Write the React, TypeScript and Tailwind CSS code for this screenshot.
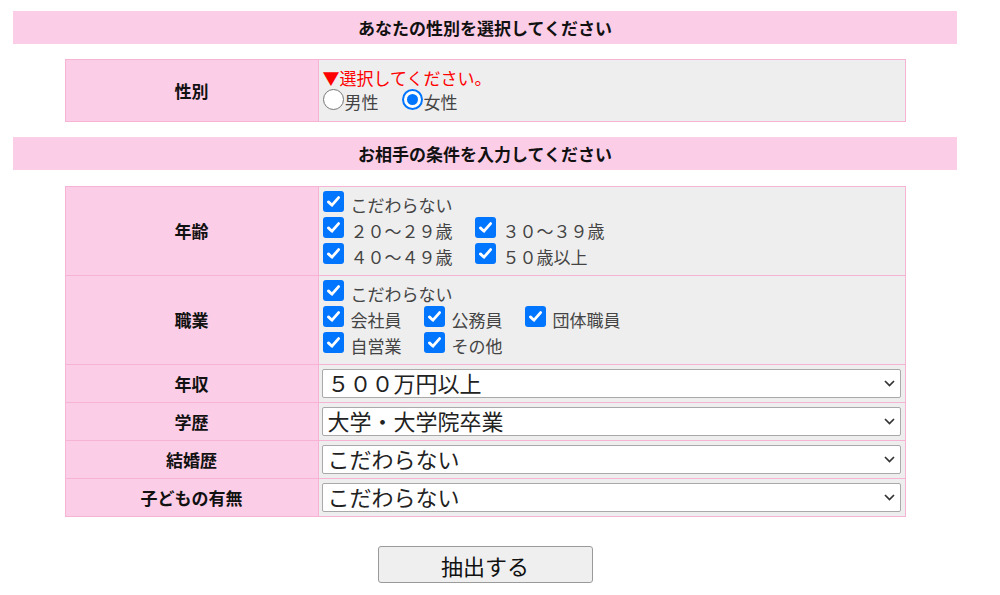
import React from "react";

const F = { fontFamily: '"Noto Sans CJK JP", "Noto Sans", sans-serif' };

function Box() {
  return (
    <span className="w-[21px] h-[21px] rounded-[3px] bg-[#0075ff] flex items-center justify-center shrink-0">
      <svg width="15" height="15" viewBox="0 0 15 15">
        <path d="M2.4 7.9 L6 11.2 L12.6 3.6" fill="none" stroke="#fff" strokeWidth="2.8" strokeLinecap="round" strokeLinejoin="round" />
      </svg>
    </span>
  );
}

function Check({ label }: { label: string }) {
  return (
    <label className="flex items-start gap-[7px]">
      <span className="mt-[2px]">
        <Box />
      </span>
      <span className="leading-[26px] mt-[3px]">{label}</span>
    </label>
  );
}

function Radio({ checked }: { checked?: boolean }) {
  return checked ? (
    <span className="w-[21px] h-[21px] rounded-full border-[2px] border-[#0075ff] bg-white flex items-center justify-center shrink-0">
      <span className="w-[11px] h-[11px] rounded-full bg-[#0075ff]" />
    </span>
  ) : (
    <span className="w-[21px] h-[21px] rounded-full border border-[#767676] bg-white shrink-0" />
  );
}

function Sel({ value }: { value: string }) {
  return (
    <div className="w-[579px] h-[29px] bg-white border border-[#a9a9a9] rounded-[2px] flex items-center justify-between pl-[5px] pr-[5px] text-[22px] text-[#222]">
      <span className="leading-none pb-[3px]">{value}</span>
      <svg width="11" height="7" viewBox="0 0 11 7">
        <path d="M1 1 L5.5 5.5 L10 1" fill="none" stroke="#333" strokeWidth="1.7" />
      </svg>
    </div>
  );
}

const labelCls =
  "bg-[#fccde7] border-r border-b border-[#f7b3d4] flex items-center justify-center font-bold text-[17px] text-[#111]";
const cellCls = "bg-[#eeeeee] border-r border-b border-[#f7b3d4] text-[17px] text-[#444]";

function CheckLine({ children }: { children: React.ReactNode }) {
  return <div className="h-[26px] flex items-start gap-[22px]">{children}</div>;
}

function SelRow({ label, value }: { label: string; value: string }) {
  return (
    <>
      <div className={labelCls + " h-[38px]"}>{label}</div>
      <div className={cellCls + " h-[38px] pl-[3px] flex items-center"}>
        <Sel value={value} />
      </div>
    </>
  );
}

export default function App() {
  return (
    <div className="w-[1000px] h-[595px] bg-white pt-[11px]" style={F}>
      <div className="ml-[13px] w-[944px]">
        <div className="h-[33px] bg-[#fccde7] flex items-center justify-center font-bold text-[17px] text-[#111]">
          あなたの性別を選択してください
        </div>

        <div className="mx-auto mt-[15px] w-[841px] grid grid-cols-[253px_1fr] border-t border-l border-[#f7b3d4]">
          <div className={labelCls + " h-[62px]"}>性別</div>
          <div className={cellCls + " h-[62px] pl-[4px] pt-[6px]"}>
            <div className="h-[23px] leading-[23px] text-[#ff0000]">▼選択してください。</div>
            <div className="h-[23px] flex items-start">
              <label className="flex items-start">
                <Radio />
                <span className="ml-[1px] leading-[23px] mt-[1px]">男性</span>
              </label>
              <label className="flex items-start ml-[23px]">
                <Radio checked />
                <span className="ml-[1px] leading-[23px] mt-[1px]">女性</span>
              </label>
            </div>
          </div>
        </div>

        <div className="mt-[15px] h-[33px] bg-[#fccde7] flex items-center justify-center font-bold text-[17px] text-[#111]">
          お相手の条件を入力してください
        </div>

        <div className="mx-auto mt-[16px] w-[841px] grid grid-cols-[253px_1fr] border-t border-l border-[#f7b3d4]">
          <div className={labelCls + " h-[89px]"}>年齢</div>
          <div className={cellCls + " h-[89px] pl-[4px] pt-[2px]"}>
            <CheckLine>
              <Check label="こだわらない" />
            </CheckLine>
            <CheckLine>
              <Check label="２０～２９歳" />
              <Check label="３０～３９歳" />
            </CheckLine>
            <CheckLine>
              <Check label="４０～４９歳" />
              <Check label="５０歳以上" />
            </CheckLine>
          </div>

          <div className={labelCls + " h-[89px]"}>職業</div>
          <div className={cellCls + " h-[89px] pl-[4px] pt-[2px]"}>
            <CheckLine>
              <Check label="こだわらない" />
            </CheckLine>
            <CheckLine>
              <Check label="会社員" />
              <Check label="公務員" />
              <Check label="団体職員" />
            </CheckLine>
            <CheckLine>
              <Check label="自営業" />
              <Check label="その他" />
            </CheckLine>
          </div>

          <SelRow label="年収" value="５００万円以上" />
          <SelRow label="学歴" value="大学・大学院卒業" />
          <SelRow label="結婚歴" value="こだわらない" />
          <SelRow label="子どもの有無" value="こだわらない" />
        </div>

        <div className="mt-[29px] flex justify-center">
          <button className="w-[215px] h-[37px] bg-[#efefef] border border-[#9a9a9a] rounded-[3px] text-[22px] text-[#111] leading-none">
            抽出する
          </button>
        </div>
      </div>
    </div>
  );
}
